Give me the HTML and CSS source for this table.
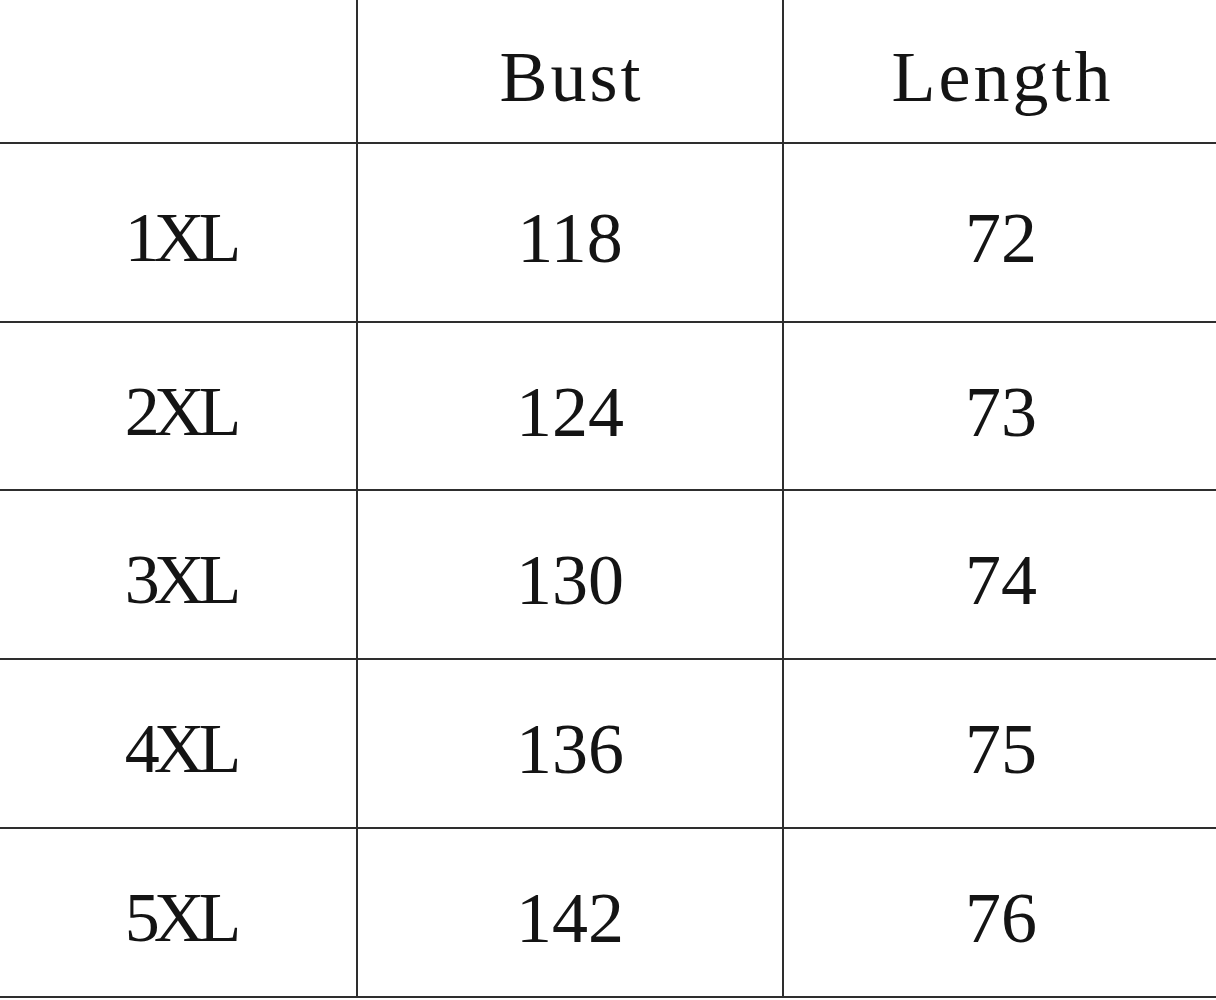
FILE: index.html
```html
<!DOCTYPE html>
<html>
<head>
<meta charset="utf-8">
<link rel="stylesheet" href="styles.css">
</head>
<body>
<div class="chart">
  <div class="cell head"></div>
  <div class="cell head word">Bust</div>
  <div class="cell head word">Length</div>

  <div class="cell size">1XL</div>
  <div class="cell">118</div>
  <div class="cell">72</div>

  <div class="cell size">2XL</div>
  <div class="cell">124</div>
  <div class="cell">73</div>

  <div class="cell size">3XL</div>
  <div class="cell">130</div>
  <div class="cell">74</div>

  <div class="cell size">4XL</div>
  <div class="cell">136</div>
  <div class="cell">75</div>

  <div class="cell size">5XL</div>
  <div class="cell">142</div>
  <div class="cell">76</div>
</div>
</body>
</html>
```
FILE: styles.css
```css
html, body {
  margin: 0;
  padding: 0;
  background: #fff;
  overflow: hidden;
  height: 1000px;
}
.chart {
  width: 1218px;
  display: grid;
  grid-template-columns: 356px 424px 1fr;
  grid-template-rows: 142px 177px 166px 167px 167px 167px;
  column-gap: 2px;
  row-gap: 2px;
  background: #2e2e2e;
  padding-bottom: 2px;
  font-family: "Liberation Serif", "Times New Roman", serif;
  font-size: 72px;
  color: #141414;
}
.cell {
  background: #fff;
  display: flex;
  align-items: center;
  justify-content: center;
  padding-top: 11px;
  box-sizing: border-box;
  line-height: 1;
}
.word {
  letter-spacing: 3px;
  padding-left: 3px;
}
.size {
  font-size: 70px;
  letter-spacing: -6px;
  padding-left: 4px;
}
```
